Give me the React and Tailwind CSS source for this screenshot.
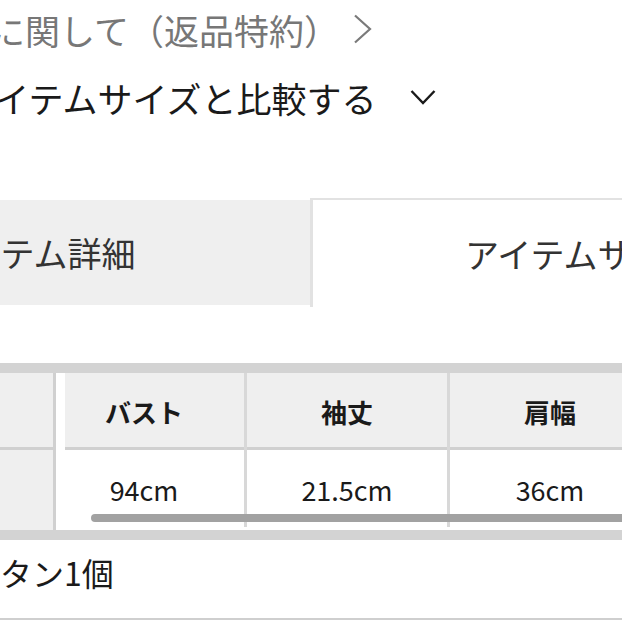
import React from 'react';

const font = "font-['Noto_Sans_CJK_JP','Noto_Sans',sans-serif]";

const columns = [
  { label: 'バスト', value: '94cm' },
  { label: '袖丈', value: '21.5cm' },
  { label: '肩幅', value: '36cm' },
];

function ChevronRight() {
  return (
    <svg width="20" height="30" viewBox="0 0 20 30" className="shrink-0">
      <polyline points="2,1.5 17,15 2,28.5" fill="none" stroke="#7a7a7a" strokeWidth="2.2" />
    </svg>
  );
}

function ChevronDown() {
  return (
    <svg width="26" height="16" viewBox="0 0 26 16" className="shrink-0">
      <polyline points="1.5,2 13,14 24.5,2" fill="none" stroke="#1a1a1a" strokeWidth="2.4" />
    </svg>
  );
}

function SizeTable() {
  return (
    <div className="h-[177px] border-y-[10px] border-[#d3d3d3] flex">
      {/* fixed first column */}
      <div className="w-[56px] shrink-0 bg-[#efefef] border-r-[3px] border-[#d0d0d0] flex flex-col">
        <div className="h-[77px] border-b-[3px] border-[#d0d0d0]" />
        <div className="flex-1" />
      </div>
      <div className="w-[9px] shrink-0 bg-white" />

      {/* scrolled part */}
      <div className="relative flex-1 overflow-hidden">
        <div className="flex ml-[-21px]">
          {columns.map(col => (
            <div key={col.label} className="w-[203px] shrink-0 border-r-[3px] border-[#d8d8d8] flex flex-col">
              <div className="h-[77px] bg-[#efefef] border-b-[3px] border-[#d0d0d0] flex items-center justify-center text-[26px] font-bold text-[#1a1a1a] pt-[2px]">
                {col.label}
              </div>
              <div className="h-[77px] bg-white flex items-center justify-center text-[27px] text-[#1a1a1a] pt-[4px]">
                {col.value}
              </div>
            </div>
          ))}
        </div>
        {/* scrollbar */}
        <div className="absolute left-[26px] right-[-20px] bottom-[8px] h-[8px] rounded-full bg-[#a2a2a2]" />
      </div>
    </div>
  );
}

export default function App() {
  return (
    <div className={`w-[622px] h-[622px] overflow-hidden bg-white flex flex-col ${font}`}>
      {/* return policy link */}
      <div className="h-[58px] shrink-0 flex items-center whitespace-nowrap">
        <span className="ml-[-10px] text-[35px] leading-none text-[#777]">に関して（返品特約）</span>
        <span className="ml-[14px] flex"><ChevronRight /></span>
      </div>

      {/* compare with own items */}
      <div className="h-[78px] shrink-0 flex items-center whitespace-nowrap">
        <span className="ml-[-39px] text-[35px] leading-none text-[#1a1a1a]">アイテムサイズと比較する</span>
        <span className="ml-[34px] flex"><ChevronDown /></span>
      </div>

      <div className="h-[62px] shrink-0" />

      {/* tabs */}
      <div className="h-[109px] shrink-0 flex">
        <div className="w-[310px] shrink-0 mt-[2px] mb-[2px] bg-[#efefef] flex items-center overflow-hidden whitespace-nowrap">
          <span className="ml-[-65px] text-[34px] leading-none text-[#333]">アイテム詳細</span>
        </div>
        <div className="flex-1 bg-white border-t-2 border-l-[3px] border-[#e2e2e2] flex items-center overflow-hidden whitespace-nowrap">
          <span className="ml-[152px] text-[34px] leading-none text-[#333]">アイテムサイズ</span>
        </div>
      </div>

      <div className="h-[56px] shrink-0" />

      <SizeTable />

      {/* material row */}
      <div className="h-[80px] shrink-0 flex items-center pb-[14px] border-b-2 border-[#cfcfcf] whitespace-nowrap">
        <span className="ml-[-32px] text-[32px] leading-none text-[#1a1a1a]">ボタン1個</span>
      </div>
    </div>
  );
}
